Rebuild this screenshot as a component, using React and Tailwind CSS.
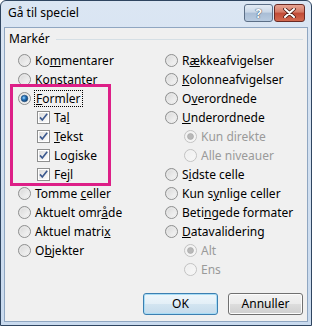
import React from 'react';

function Radio({ checked, disabled }) {
  const id = disabled ? 'rgd' : 'rg';
  return (
    <svg width="13" height="13" viewBox="0 0 13 13" className="shrink-0">
      <defs>
        <linearGradient id="rg" x1="0" y1="0" x2="1" y2="1">
          <stop offset="0" stopColor="#d4d4d4" />
          <stop offset="1" stopColor="#fbfbfb" />
        </linearGradient>
        <linearGradient id="rgd" x1="0" y1="0" x2="1" y2="1">
          <stop offset="0" stopColor="#ececec" />
          <stop offset="1" stopColor="#fafafa" />
        </linearGradient>
        <radialGradient id="rdot" cx="0.4" cy="0.4" r="0.6">
          <stop offset="0" stopColor="#a6dcff" />
          <stop offset="0.45" stopColor="#2a78c0" />
          <stop offset="1" stopColor="#0d3d6e" />
        </radialGradient>
      </defs>
      <circle cx="6.5" cy="6.5" r="6" fill={`url(#${id})`} stroke={disabled ? '#c2c2c2' : '#8e8f8f'} />
      <circle cx="6.5" cy="6.5" r="4.5" fill="none" stroke={disabled ? '#f4f4f4' : '#e9e9e9'} />
      {checked && !disabled && <circle cx="6.5" cy="6.5" r="3.3" fill="url(#rdot)" stroke="#1b4a7a" strokeWidth="0.6" />}
      {checked && disabled && <circle cx="6.5" cy="6.5" r="3" fill="#b8b8b8" stroke="#a4a4a4" strokeWidth="0.6" />}
    </svg>
  );
}

function Check() {
  return (
    <svg width="13" height="13" viewBox="0 0 13 13" className="shrink-0">
      <defs>
        <linearGradient id="cg" x1="0" y1="0" x2="1" y2="1">
          <stop offset="0" stopColor="#dcdcdc" />
          <stop offset="1" stopColor="#fdfdfd" />
        </linearGradient>
      </defs>
      <rect x="0.5" y="0.5" width="12" height="12" fill="#fff" stroke="#8e8f8f" />
      <rect x="2" y="2" width="9" height="9" fill="url(#cg)" />
      <path d="M3 6.4 L5.3 9 L10.2 2.8" fill="none" stroke="#3d5a8f" strokeWidth="1.7" />
    </svg>
  );
}

function Opt({ kind = 'radio', checked, disabled, indent, focus, children }) {
  return (
    <div className={`flex h-[19px] items-center ${indent ? 'pl-[19px]' : ''}`}>
      {kind === 'check' ? <Check /> : <Radio checked={checked} disabled={disabled} />}
      <span
        className={`ml-[4px] leading-[15px] ${disabled ? 'text-[#9a9a9a]' : 'text-black'} ${
          focus ? 'outline outline-1 outline-dotted outline-black outline-offset-0 px-px -ml-px' : ''
        }`}
      >
        {children}
      </span>
    </div>
  );
}

export default function App() {
  return (
    <div className="relative w-[312px] h-[326px] flex flex-col border border-[#2f4560] rounded-t-[6px] bg-[linear-gradient(#dbe6f3,#c9daee)] font-['Noto_Sans',sans-serif] text-[12px] overflow-hidden">
      {/* title bar */}
      <div className="flex h-[26px] shrink-0 justify-between">
        <span className="pl-[7px] pt-[3px] leading-[18px] text-black">Gå til speciel</span>
        <div className="flex gap-[1px] pt-[3px] pr-[6px]">
          <div className="flex h-[18px] w-[29px] items-center justify-center rounded-[3px] border border-[#5c6f87] bg-[linear-gradient(#e3ebf4_0%,#c9d7e7_45%,#a9bdd5_50%,#b8cbe0_100%)]">
            <span className="font-bold text-[13px] leading-[14px] text-white [text-shadow:0_0_1px_#2c3e55,0_0_1px_#2c3e55]">?</span>
          </div>
          <div className="flex h-[18px] w-[31px] items-center justify-center rounded-[3px] border border-[#6a2a24] bg-[linear-gradient(#e8a493_0%,#d47a66_45%,#c14a36_50%,#d2694f_100%)]">
            <svg width="13" height="10" viewBox="0 0 13 10">
              <path d="M2 1 L11 9 M11 1 L2 9" stroke="#4a1b14" strokeWidth="3.6" strokeLinecap="round" />
              <path d="M2 1 L11 9 M11 1 L2 9" stroke="#fff" strokeWidth="2" strokeLinecap="round" />
            </svg>
          </div>
        </div>
      </div>

      {/* client area */}
      <div className="flex-1 mx-[3px] mb-[3px] border border-[#8fa6c1] bg-[#f0f0f0] flex flex-col">
        <div className="flex items-center mt-[3px] pl-[4px] pr-[4px] h-[16px]">
          <span className="leading-[16px]">Markér</span>
          <div className="flex-1 ml-[6px] h-px bg-[#d5dfe5]" />
        </div>

        <div className="flex pl-[13px] mt-[4px]">
          <div className="flex flex-col w-[147px]">
            <Opt>Ko<u>m</u>mentarer</Opt>
            <Opt>Konstanter</Opt>
            <Opt checked focus><u>F</u>ormler</Opt>
            <Opt kind="check" indent>Ta<u>l</u></Opt>
            <Opt kind="check" indent><u>T</u>ekst</Opt>
            <Opt kind="check" indent>Lo<u>g</u>iske</Opt>
            <Opt kind="check" indent>Fe<u>j</u>l</Opt>
            <Opt>Tomme <u>c</u>eller</Opt>
            <Opt>Aktuelt omr<u>å</u>de</Opt>
            <Opt>Aktuel matri<u>x</u></Opt>
            <Opt>O<u>b</u>jekter</Opt>
          </div>
          <div className="flex flex-col">
            <Opt>R<u>æ</u>kkeafvigelser</Opt>
            <Opt><u>K</u>olonneafvigelser</Opt>
            <Opt>O<u>v</u>erordnede</Opt>
            <Opt><u>U</u>nderordnede</Opt>
            <Opt indent checked disabled>Kun direkte</Opt>
            <Opt indent disabled>Alle niveauer</Opt>
            <Opt>S<u>i</u>dste celle</Opt>
            <Opt>Kun s<u>y</u>nlige celler</Opt>
            <Opt>Beti<u>n</u>gede formater</Opt>
            <Opt><u>D</u>atavalidering</Opt>
            <Opt indent checked disabled>Alt</Opt>
            <Opt indent disabled>Ens</Opt>
          </div>
        </div>

        <div className="flex justify-end gap-[10px] pr-[4px] mt-[14px]">
          <button className="h-[22px] w-[75px] rounded-[3px] border border-[#3c7fb1] shadow-[inset_0_0_0_1px_#a8dcf5] bg-[linear-gradient(#eef6fb_0%,#e3eff7_50%,#d3e5f1_50%,#c5dbec_100%)] text-black leading-[18px]">
            OK
          </button>
          <button className="h-[22px] w-[75px] rounded-[3px] border border-[#707070] shadow-[inset_0_0_0_1px_#fcfcfc] bg-[linear-gradient(#f2f2f2_0%,#ebebeb_50%,#dddddd_50%,#cfcfcf_100%)] text-black leading-[18px]">
            Annuller
          </button>
        </div>
      </div>

      {/* annotation highlight */}
      <div className="absolute left-[9px] top-[83px] w-[101px] h-[102px] border-[3px] border-[#dd1f87] pointer-events-none" />
    </div>
  );
}
